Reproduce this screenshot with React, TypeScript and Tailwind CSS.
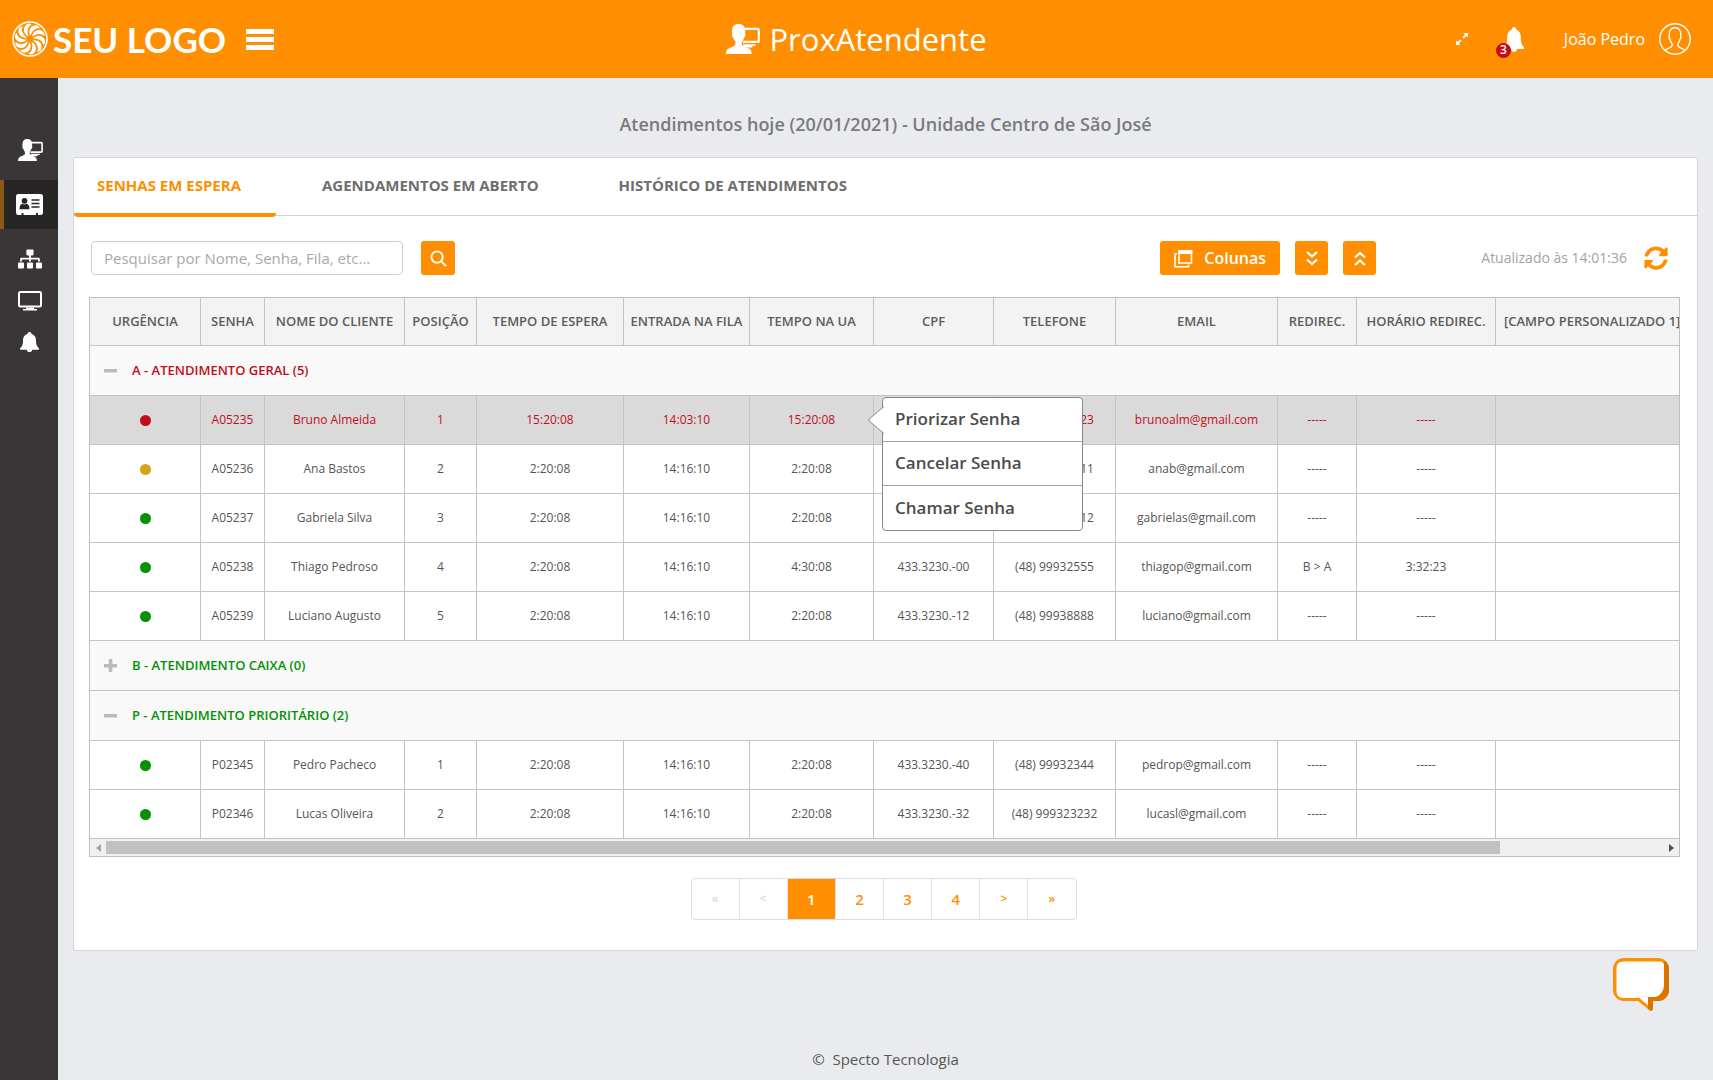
import React, { useState } from "react";
import { FaSitemap, FaSyncAlt } from "react-icons/fa";
import clsx from "clsx";

type Row = {
    urgency: "red" | "yellow" | "green";
    cells: string[];
    selected?: boolean;
};

type Group = {
    title: string;
    open: boolean;
    alert?: boolean;
    rows: Row[];
};

const columns = [
    { label: "URGÊNCIA", width: "w-[111px]" },
    { label: "SENHA", width: "w-[64px]" },
    { label: "NOME DO CLIENTE", width: "w-[140px]" },
    { label: "POSIÇÃO", width: "w-[72px]" },
    { label: "TEMPO DE ESPERA", width: "w-[147px]" },
    { label: "ENTRADA NA FILA", width: "w-[126px]" },
    { label: "TEMPO NA UA", width: "w-[124px]" },
    { label: "CPF", width: "w-[120px]" },
    { label: "TELEFONE", width: "w-[122px]" },
    { label: "EMAIL", width: "w-[162px]" },
    { label: "REDIREC.", width: "w-[79px]" },
    { label: "HORÁRIO REDIREC.", width: "w-[139px]" },
    { label: "[CAMPO PERSONALIZADO 1]", width: "" }
];

const groups: Group[] = [
    {
        title: "A - ATENDIMENTO GERAL (5)",
        open: true,
        alert: true,
        rows: [
            { urgency: "red", selected: true, cells: ["A05235", "Bruno Almeida", "1", "15:20:08", "14:03:10", "15:20:08", "", "(48) 99932323", "brunoalm@gmail.com", "-----", "-----", ""] },
            { urgency: "yellow", cells: ["A05236", "Ana Bastos", "2", "2:20:08", "14:16:10", "2:20:08", "", "(48) 99932311", "anab@gmail.com", "-----", "-----", ""] },
            { urgency: "green", cells: ["A05237", "Gabriela Silva", "3", "2:20:08", "14:16:10", "2:20:08", "", "(48) 99932312", "gabrielas@gmail.com", "-----", "-----", ""] },
            { urgency: "green", cells: ["A05238", "Thiago Pedroso", "4", "2:20:08", "14:16:10", "4:30:08", "433.3230.-00", "(48) 99932555", "thiagop@gmail.com", "B > A", "3:32:23", ""] },
            { urgency: "green", cells: ["A05239", "Luciano Augusto", "5", "2:20:08", "14:16:10", "2:20:08", "433.3230.-12", "(48) 99938888", "luciano@gmail.com", "-----", "-----", ""] }
        ]
    },
    { title: "B - ATENDIMENTO CAIXA (0)", open: false, rows: [] },
    {
        title: "P - ATENDIMENTO PRIORITÁRIO (2)",
        open: true,
        rows: [
            { urgency: "green", cells: ["P02345", "Pedro Pacheco", "1", "2:20:08", "14:16:10", "2:20:08", "433.3230.-40", "(48) 99932344", "pedrop@gmail.com", "-----", "-----", ""] },
            { urgency: "green", cells: ["P02346", "Lucas Oliveira", "2", "2:20:08", "14:16:10", "2:20:08", "433.3230.-32", "(48) 999323232", "lucasl@gmail.com", "-----", "-----", ""] }
        ]
    }
];

const dotColors = {
    red: "bg-[#c20e1a]",
    yellow: "bg-[#d9a21b]",
    green: "bg-[#049104]"
};

const blades = [0, 36, 72, 108, 144, 180, 216, 252, 288, 324];

const SwirlLogo = () => (
    <svg viewBox="-18 -18 36 36" className="size-9 shrink-0" aria-hidden="true">
        <circle r="17" fill="none" stroke="white" strokeWidth="1.6" />
        {blades.map((angle) => (
            <path
                key={angle}
                transform={`rotate(${angle})`}
                d="M0.4 -3 C-2 -7.6 -0.4 -13 5.4 -13.8 C8 -14 9.4 -12.4 9.8 -10.6 C6.6 -11.6 2.2 -9.4 0.4 -3 Z"
                fill="white"
            />
        ))}
    </svg>
);

const AttendantIcon = ({ className }: { className: string }) => (
    <svg viewBox="0 0 34 30" className={className} aria-hidden="true">
        <path d="M17 4.9h14.6a1.2 1.2 0 0 1 1.2 1.2v10.6a1.2 1.2 0 0 1-1.2 1.2H17" fill="none" stroke="white" strokeWidth="2.2" />
        <path d="M17 20.2h12.6v1.6h-3.2v1.6H18z" fill="white" />
        <path
            d="M12.6 0c4.2 0 6.6 2.6 6.6 7 0 1.400-.2 2.200.2 3.200.2 2-.6 2.600-1.200 3.200-.4 1.800-1.200 3-2.200 4.200v2.600c.4 2 3.400 2.600 6 3.800 2.800 1.200 3.600 3 3.700 6H0c0-3 .8-4.800 3.600-6 2.600-1.200 5.400-1.800 5.800-3.800v-2.600c-1-1.200-1.800-2.400-2.200-4.200-.8-.6-1.500-1.400-1.300-3.200.3-1 .1-1.800.1-3.200C6 2.600 8.600 0 12.600 0z"
            fill="white"
        />
    </svg>
);

const BellIcon = ({ className }: { className: string }) => (
    <svg viewBox="0 0 20 22" className={className} preserveAspectRatio="none" aria-hidden="true">
        <path
            d="M10 0c1.300 0 2.100.9 2.100 2.100 3 .9 4.700 3.300 4.700 6.500 0 3.600.2 5.700 1.600 7.700.8 1 1.600 1.200 1.600 2.300 0 .5-.3.800-.8.800h-6.300C12.600 21 11.500 22 10 22s-2.600-1-2.900-2.600H.8c-.5 0-.8-.3-.8-.8 0-1.100.8-1.300 1.600-2.300 1.400-2 1.600-4.100 1.600-7.700 0-3.200 1.700-5.600 4.700-6.500C7.900.9 8.700 0 10 0z"
            fill="white"
        />
    </svg>
);

const CardIcon = () => (
    <svg viewBox="0 0 27 21" className="h-[21px] w-[27px]" aria-hidden="true">
        <path d="M2.500 0h22A2.500 2.500 0 0 1 27 2.500v16a2.500 2.500 0 0 1-2.500 2.500H22v-2h-2v2H7.500v-2h-2v2h-3A2.500 2.500 0 0 1 0 18.500v-16A2.500 2.500 0 0 1 2.500 0z" fill="white" />
        <circle cx="8.500" cy="6.800" r="2.900" fill="#282525" />
        <path d="M3.500 15.200c0-3.600 1.200-5 3-5.400 1.300.8 2.700.8 4 0 1.800.4 3 1.800 3 5.400z" fill="#282525" />
        <path d="M15.500 6h8M15.500 9.500h8M15.500 13h8" stroke="#282525" strokeWidth="1.400" />
    </svg>
);

const MonitorIcon = () => (
    <svg viewBox="0 0 24 20" className="h-5 w-6" aria-hidden="true">
        <rect x="1" y="1" width="22" height="14.500" rx="1.500" fill="none" stroke="white" strokeWidth="2" />
        <path d="M8 16.500h8v1.500h3v1.500H5V18h3z" fill="white" />
    </svg>
);

const Header = () => (
    <header className="grid h-[78px] grid-cols-[1fr_auto_1fr] items-center bg-[#ff8f00] text-white">
        <div className="flex items-center pl-3">
            <SwirlLogo />
            <span className="ml-[5px] font-['Lato',sans-serif] text-[35px] leading-9 font-bold">SEU LOGO</span>
            <button type="button" aria-label="Menu" className="ml-5 flex w-7 flex-col gap-[3px]">
                <span className="h-[5px] bg-white" />
                <span className="h-[5px] bg-white" />
                <span className="h-[5px] bg-white" />
            </button>
        </div>
        <div className="flex items-center gap-[9px]">
            <AttendantIcon className="h-[30px] w-[34px]" />
            <h1 className="text-[31px] leading-10">ProxAtendente</h1>
        </div>
        <div className="flex items-center justify-end pr-[22px]">
            <button type="button" aria-label="Tela cheia">
                <svg viewBox="0 0 14 14" className="size-[14px]" aria-hidden="true">
                    <path d="M8.500 1H13v4.500l-1.600-1.600-2.700 2.700-1.300-1.300 2.700-2.700zM5.500 13H1V8.500l1.600 1.600 2.700-2.700 1.300 1.300-2.700 2.700z" fill="white" />
                </svg>
            </button>
            <button type="button" aria-label="Notificações" className="relative ml-[35px]">
                <BellIcon className="h-[25px] w-5" />
                <span className="absolute -bottom-[6px] -left-2 flex size-[15px] items-center justify-center rounded-full bg-[#c20e1a] text-xs font-semibold">3</span>
            </button>
            <a href="#perfil" className="ml-10 flex items-center gap-[14px] text-base">
                João Pedro
                <svg viewBox="0 0 32 32" className="size-8" fill="none" stroke="white" strokeWidth="1.400" aria-hidden="true">
                    <circle cx="16" cy="16" r="15.200" />
                    <path d="M6 27.400c1.200-1.600 3.400-2.200 5.400-3 1.200-.6 1.900-1.300 1.900-2.600 0-1.100-.5-1.700-1.100-2.500-.6-1-1-2-1.300-3.400-.9-.7-1.200-2-.6-3.100-.5-5 1.500-8 5.700-8s6.200 3 5.700 8c.6 1.100.3 2.400-.6 3.100-.3 1.400-.7 2.400-1.300 3.400-.6.8-1.100 1.400-1.100 2.500 0 1.300.7 2 1.900 2.600 2 .8 4.200 1.400 5.400 3" />
                </svg>
            </a>
        </div>
    </header>
);

const Sidebar = () => (
    <nav className="flex w-[58px] shrink-0 flex-col bg-[#3a3536] pt-12 text-white">
        <a href="#atendente" aria-label="Atendente" className="flex h-12 items-center justify-center pl-[2px]">
            <AttendantIcon className="h-[22px] w-[25px]" />
        </a>
        <a href="#senhas" aria-label="Senhas" className="my-[6px] flex h-[49px] items-center justify-center border-l-4 border-[#8a5818] bg-[#282525] pr-1">
            <CardIcon />
        </a>
        <a href="#filas" aria-label="Filas" className="flex h-[47px] items-center justify-center pl-px">
            <FaSitemap className="size-6" />
        </a>
        <a href="#paineis" aria-label="Painéis" className="flex h-[38px] items-center justify-center pl-px">
            <MonitorIcon />
        </a>
        <a href="#alertas" aria-label="Alertas" className="flex h-[43px] items-center justify-center pl-px">
            <BellIcon className="h-5 w-[19px]" />
        </a>
    </nav>
);

const tabs = ["SENHAS EM ESPERA", "AGENDAMENTOS EM ABERTO", "HISTÓRICO DE ATENDIMENTOS"];

const Tabs = () => (
    <div role="tablist" className="flex h-[58px] border-b border-[#d3d3d3] text-[15px] font-bold">
        {tabs.map((tab, index) => (
            <button
                key={tab}
                type="button"
                role="tab"
                aria-selected={index === 0}
                className={clsx(
                    "h-[59px] shrink-0 border-b-4 text-left whitespace-nowrap",
                    index === 0 && "w-[202px] rounded-b-sm border-[#ff8f00] pl-[23px] text-[#ff8f00]",
                    index === 1 && "ml-[46px] border-transparent text-[#6e6e6e]",
                    index === 2 && "ml-20 border-transparent text-[#6e6e6e]"
                )}
            >
                {tab}
            </button>
        ))}
    </div>
);

const Toolbar = () => (
    <div className="flex items-center px-4 pt-[25px] pb-[22px]">
        <input
            type="search"
            aria-label="Pesquisar"
            placeholder="Pesquisar por Nome, Senha, Fila, etc..."
            className="ml-px h-[34px] w-[312px] rounded border border-[#cfcfcf] px-3 text-[15px] placeholder:text-[#a9a9a9]"
        />
        <button type="button" aria-label="Buscar" className="ml-[18px] flex h-[34px] w-[34px] items-center justify-center rounded-[3px] bg-[#ff8f00]">
            <svg viewBox="0 0 18 18" className="size-[17px]" fill="none" stroke="white" strokeWidth="2" aria-hidden="true">
                <circle cx="7.500" cy="7.500" r="6" />
                <path d="M12 12l5 5" />
            </svg>
        </button>
        <div className="ml-auto flex items-center text-white">
            <button type="button" className="flex h-[34px] w-[120px] items-center rounded-[3px] bg-[#ff8f00] pl-[14px] text-base font-semibold">
                <svg viewBox="0 0 19 19" className="mr-[11px] size-[19px]" fill="none" stroke="white" aria-hidden="true">
                    <path d="M5 2.500h12.500v11.500H5z" strokeWidth="1.600" />
                    <path d="M4.200 1h14.100v4H4.200z" fill="white" stroke="none" />
                    <path d="M3 5H1v12.800h13.500V15.500" strokeWidth="1.600" />
                </svg>
                Colunas
            </button>
            <button type="button" aria-label="Expandir todos" className="ml-[15px] flex h-[34px] w-[33px] items-center justify-center rounded-[3px] bg-[#ff8f00]">
                <svg viewBox="0 0 12 15" className="h-[15px] w-3" fill="none" stroke="white" strokeWidth="2.200" aria-hidden="true">
                    <path d="M1 1l5 4.600L11 1M1 8.500l5 4.600 5-4.600" />
                </svg>
            </button>
            <button type="button" aria-label="Recolher todos" className="ml-[15px] flex h-[34px] w-[33px] items-center justify-center rounded-[3px] bg-[#ff8f00]">
                <svg viewBox="0 0 12 15" className="h-[15px] w-3" fill="none" stroke="white" strokeWidth="2.200" aria-hidden="true">
                    <path d="M1 6.500l5-4.600 5 4.600M1 14l5-4.600 5 4.600" />
                </svg>
            </button>
        </div>
        <span className="ml-[105px] text-sm text-[#a3a3a3]">Atualizado às 14:01:36</span>
        <button type="button" aria-label="Atualizar" className="mr-[13px] ml-[17px] text-[#ff8f00]">
            <FaSyncAlt className="size-6" />
        </button>
    </div>
);

const menuItems = ["Priorizar Senha", "Cancelar Senha", "Chamar Senha"];

const RowMenu = () => (
    <div role="menu" className="absolute top-px left-2 z-10 w-[201px] rounded border border-[#8b8688] bg-white text-left">
        <svg viewBox="0 0 16 28" className="absolute top-2 -left-[15px] h-7 w-4" aria-hidden="true">
            <path d="M16 0.500L1.200 13Q0.500 14 1.200 15L16 27.500" fill="white" stroke="#8b8688" />
        </svg>
        {menuItems.map((item) => (
            <button
                key={item}
                type="button"
                role="menuitem"
                className="block h-11 w-full border-b border-[#a5a5a5] px-3 text-left text-[17px] font-semibold text-[#4c4c4c] last:border-b-0"
            >
                {item}
            </button>
        ))}
    </div>
);

const GroupToggle = ({ open }: { open: boolean }) => (
    <svg viewBox="0 0 13 13" className="size-[13px]" aria-hidden="true">
        <path d={open ? "M0 5h13v3.500H0z" : "M0 5h4.800V0h3.500v5H13v3.500H8.300V13H4.800V8.500H0z"} fill="#b9babc" />
    </svg>
);

const QueueTable = () => (
    <div className="mr-[17px] ml-[15px] overflow-hidden border border-[#bfbfbf]">
        <table className="w-full table-fixed border-separate border-spacing-0 text-center">
            <thead>
                <tr className="h-12 bg-[#f3f3f3] text-[13px] text-[#5c5c5c]">
                    {columns.map((col, index) => (
                        <th
                            key={col.label}
                            scope="col"
                            className={clsx(
                                col.width,
                                "border-b border-[#c4c4c4] p-0 font-semibold whitespace-nowrap",
                                index < columns.length - 1 ? "border-r" : "pl-2 text-left"
                            )}
                        >
                            {col.label}
                        </th>
                    ))}
                </tr>
            </thead>
            {groups.map((group) => (
                <tbody key={group.title}>
                    <tr className="h-[50px] bg-[#f9f9f9]">
                        <td colSpan={columns.length} className="border-b border-[#c4c4c4] p-0 text-left">
                            <button
                                type="button"
                                aria-expanded={group.open}
                                className={clsx(
                                    "flex items-center gap-[15px] pl-[14px] text-[13px] font-semibold",
                                    group.alert ? "text-[#c20e1a]" : "text-[#049104]"
                                )}
                            >
                                <GroupToggle open={group.open} />
                                {group.title}
                            </button>
                        </td>
                    </tr>
                    {group.rows.map((row) => (
                        <tr
                            key={row.cells[0]}
                            className={clsx("h-[49px] text-xs", row.selected ? "bg-[#dadada] text-[#c20e1a]" : "bg-white text-[#555]")}
                        >
                            <td className="border-r border-b border-[#c4c4c4] p-0">
                                <span className={clsx("mx-auto block size-[11px] rounded-full", dotColors[row.urgency])} />
                            </td>
                            {row.cells.map((cell, index) => (
                                <td
                                    key={index}
                                    className={clsx(
                                        "relative border-b border-[#c4c4c4] p-0 whitespace-nowrap",
                                        index < row.cells.length - 1 && "border-r"
                                    )}
                                >
                                    {cell}
                                    {row.selected && index === 6 && <RowMenu />}
                                </td>
                            ))}
                        </tr>
                    ))}
                </tbody>
            ))}
        </table>
        <div className="flex h-[17px] items-center bg-[#f0f0f0]">
            <button type="button" aria-label="Rolar para a esquerda" className="flex w-4 justify-center">
                <svg viewBox="0 0 5 8" className="h-2 w-[5px]" aria-hidden="true">
                    <path d="M5 0v8L0 4z" fill="#a3a3a3" />
                </svg>
            </button>
            <div className="h-[13px] flex-1">
                <div className="h-full w-[89.5%] bg-[#c1c1c1]" />
            </div>
            <button type="button" aria-label="Rolar para a direita" className="flex w-4 justify-center">
                <svg viewBox="0 0 5 8" className="h-2 w-[5px]" aria-hidden="true">
                    <path d="M0 0v8l5-4z" fill="#505050" />
                </svg>
            </button>
        </div>
    </div>
);

const pages = ["«", "<", "1", "2", "3", "4", ">", "»"];

const Pagination = () => {
    const [page, setPage] = useState("1");

    return (
        <div className="flex justify-center pt-[21px] pr-1 pb-[30px]">
            <nav aria-label="Paginação" className="flex h-[42px] w-[386px] overflow-hidden rounded border border-[#d9dce6]">
                {pages.map((item, index) => (
                    <button
                        key={item}
                        type="button"
                        disabled={index < 2}
                        onClick={() => index > 1 && index < 6 && setPage(item)}
                        className={clsx(
                            "flex-1 border-r border-[#e2e4ec] font-semibold last:border-r-0",
                            index > 1 && index < 6 ? "text-[15px]" : "text-xs",
                            index < 2 && "text-[#d3d9e2]",
                            index >= 2 && (item === page ? "bg-[#ff8f00] text-white" : "text-[#ff8f00]")
                        )}
                    >
                        {item}
                    </button>
                ))}
            </nav>
        </div>
    );
};

const ChatButton = () => (
    <button type="button" aria-label="Abrir chat" className="fixed right-11 bottom-[69px]">
        <svg viewBox="0 0 56 53" className="h-[53px] w-14" aria-hidden="true">
            <path d="M11 0h34a11 11 0 0 1 11 11v21a11 11 0 0 1-11 11h-5v8.500q-1 1.500-3 1L25 43H11A11 11 0 0 1 0 32V11A11 11 0 0 1 11 0z" fill="#ff8f00" />
            <path d="M52.500 3A11 11 0 0 1 56 11v21a11 11 0 0 1-11 11h-5v8.500q-1 1.500-3 1L35 51V39h6l9-7V4z" fill="#dd7400" />
            <path d="M10 3.500h37q4 0 4 4V28q-1 9-9 11h-7v8.500L26.500 40H10q-6.500 0-6.500-7V10q0-6.500 6.500-6.500z" fill="white" />
        </svg>
    </button>
);

const App = () => (
    <div className="flex min-h-screen flex-col bg-[#eaebef] font-['Open_Sans','Noto_Sans',sans-serif]">
        <Header />
        <div className="flex flex-1">
            <Sidebar />
            <main className="flex min-w-0 flex-1 flex-col px-[15px]">
                <h2 className="pt-8 pb-[19px] text-center text-lg leading-7 font-semibold text-[#7a7a7a]">
                    Atendimentos hoje (20/01/2021) - Unidade Centro de São José
                </h2>
                <section className="rounded-[3px] border border-[#d6d6d6] bg-white">
                    <Tabs />
                    <Toolbar />
                    <QueueTable />
                    <Pagination />
                </section>
                <footer className="mt-auto pb-[9px] text-center text-[15px] leading-6 text-[#555]">©&nbsp; Specto Tecnologia</footer>
            </main>
        </div>
        <ChatButton />
    </div>
);

export default App;
